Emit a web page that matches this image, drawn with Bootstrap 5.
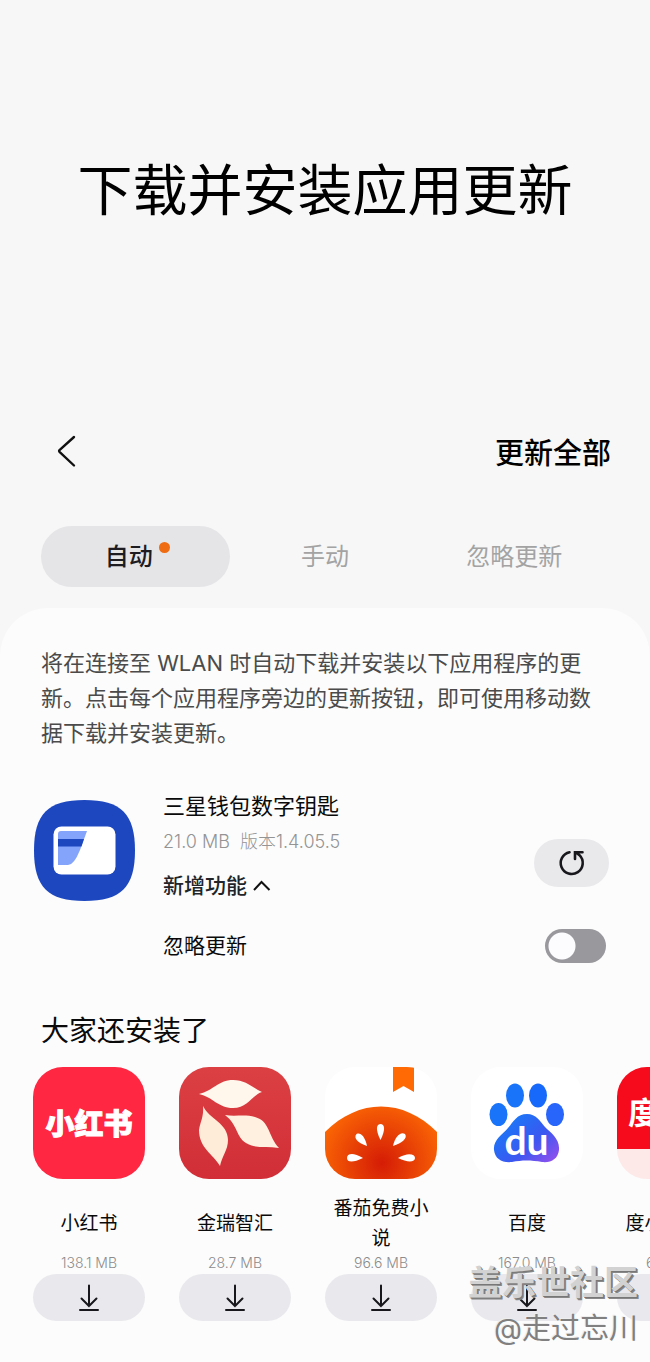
<!DOCTYPE html>
<html lang="zh-CN">
<head>
<meta charset="utf-8">
<meta name="viewport" content="width=device-width, initial-scale=1">
<title>下载并安装应用更新</title>
<link href="https://cdn.jsdelivr.net/npm/bootstrap@5.3.0/dist/css/bootstrap.min.css" rel="stylesheet">
<style>
  body { font-family: Inter, "Noto Sans CJK SC", sans-serif; background: #f7f7f7; color: #0a0a0a; }
  button { color: inherit; }
  .hero { padding: 148px 16px 188px; }
  .hero-title { font-size: 55px; line-height: 84px; font-weight: 400; color: #000; }
  .topbar { padding: 4px 39px 0 50px; height: 64px; }
  .back-btn { width: 32px; height: 48px; margin-top: -6px; }
  .update-all { font-size: 29px; line-height: 44px; font-weight: 500; color: #000; }
  .tabs-row { padding: 42px 41px 21px; }
  .tab-btn { height: 61px; font-size: 24px; line-height: 36px; color: #a3a3a3; background: none; }
  .tab-btn.active { background: #e5e5e8; color: #1c1c22; font-weight: 500; }
  .tab-label { display: inline-block; margin-right: 14px; padding-left: 0; }
  .tab-btn.active .tab-label { margin-right: 14px; }
  .new-dot { top: 3px; right: -17px; width: 11px; height: 11px; background: #f06c12; }
  .panel { background: #fcfcfc; border-radius: 48px 48px 0 0; padding-top: 38px; }
  .intro { font-size: 22px; line-height: 35px; color: #4b4b4b; padding: 0 48px 0 41px; margin-bottom: 38px; }
  .update-item { padding: 0 41px 0 34px; column-gap: 28px; }
  .wallet-icon { width: 101px; height: 101px; margin-top: 11px; }
  .item-name { font-size: 22px; line-height: 34px; font-weight: 400; }
  .item-meta { font-size: 18px; line-height: 38px; color: #949494; font-weight: 300; }
  .whats-new { font-size: 21px; line-height: 32px; font-weight: 500; margin-top: 9px; column-gap: 6px; }
  .refresh-btn { width: 75px; height: 48px; margin-bottom: 15px; background: #e9e9ec; }
  .ignore-row { margin-top: 26px; font-size: 21px; line-height: 36px; }
  .form-check-input.ignore-switch {
    width: 61px; height: 34px; margin: 0 3px 0 0; border: 0; background-color: #98989d;
    background-image: radial-gradient(circle at 17px 17px, #fcfcff 13px, transparent 14px);
    background-size: 100% 100%; background-position: left center;
  }
  .form-check-input.ignore-switch:checked { background-color: #3478f6; background-image: radial-gradient(circle at 44px 17px, #fcfcff 13px, transparent 14px); }
  .also-title { font-size: 28px; line-height: 40px; font-weight: 400; padding-left: 41px; margin: 47px 0 16px; }
  .app-strip { gap: 34px; padding: 0 33px 41px; overflow-x: auto; scrollbar-width: none; }
  .app-strip::-webkit-scrollbar { display: none; }
  .app-tile { width: 112px; }
  .app-icon { width: 112px; height: 112px; border-radius: 30px; display: block; }
  .app-name { height: 60px; margin-top: 15px; font-size: 19px; line-height: 30px; width: 100px; }
  .app-size { font-size: 14px; line-height: 18px; margin-bottom: 2px; color: #8c8c8c; font-weight: 300; }
  .get-btn { height: 47px; background: #e9e9ed; }
  .watermark { right: 12px; bottom: 12px; pointer-events: none; }
  .mark-site { font-size: 34px; line-height: 50px; font-weight: 700; color: #d2d2d2; text-shadow: 1px 1px 0 #777, 2px 2px 0 #888; }
  .mark-user { font-size: 29px; line-height: 42px; color: #808080; text-shadow: -1px -1px 0 #eee; }
</style>
</head>
<body>
<div class="position-relative min-vh-100 d-flex flex-column overflow-hidden">
  <header class="hero text-center">
    <h1 class="hero-title m-0">下载并安装应用更新</h1>
  </header>

  <div class="topbar d-flex align-items-center justify-content-between">
    <button type="button" class="back-btn btn p-0 border-0" aria-label="返回">
      <svg class="d-block" width="32" height="48" viewBox="0 0 32 48" fill="none" stroke="#111" stroke-width="2.4" stroke-linecap="round" stroke-linejoin="round"><path d="M24 10 9.500 23.200Q8.700 24 9.500 24.800L24 38.500"/></svg>
    </button>
    <button type="button" class="update-all btn p-0 border-0">更新全部</button>
  </div>

  <nav class="tabs-row d-flex" aria-label="更新方式">
    <button type="button" class="tab-btn active btn border-0 rounded-pill flex-fill w-100 p-0"><span class="tab-label position-relative">自动<span class="new-dot position-absolute rounded-circle"></span></span></button>
    <button type="button" class="tab-btn btn border-0 rounded-pill flex-fill w-100 p-0">手动</button>
    <button type="button" class="tab-btn btn border-0 rounded-pill flex-fill w-100 p-0">忽略更新</button>
  </nav>

  <main class="panel flex-grow-1">
    <p class="intro">将在连接至 WLAN 时自动下载并安装以下应用程序的更新。点击每个应用程序旁边的更新按钮，即可使用移动数据下载并安装更新。</p>

    <section class="update-item d-flex align-items-start">
      <svg class="wallet-icon flex-shrink-0" viewBox="0 0 101 101" aria-hidden="true">
        <path d="M50.500 0C87 0 101 14 101 50.500S87 101 50.500 101 0 87 0 50.500 14 0 50.500 0Z" fill="#1d47bf"/>
        <rect x="19.500" y="26.500" width="62" height="48" rx="8" fill="#fff"/>
        <path d="M27 31H53L46 50Q40 65 34 65H24V34Q24 31 27 31Z" fill="#84a3fa"/>
        <path d="M24 39H50L47.500 46.500H24Z" fill="#1d47bf"/>
      </svg>
      <div class="flex-grow-1">
        <div class="d-flex justify-content-between align-items-end">
          <div>
            <h2 class="item-name m-0">三星钱包数字钥匙</h2>
            <div class="item-meta">21.0 MB&nbsp; 版本1.4.05.5</div>
            <button type="button" class="whats-new btn p-0 border-0 d-flex align-items-center">新增功能
              <svg width="18" height="12" viewBox="0 0 18 12" fill="none" stroke="#111" stroke-width="2"><path d="M1 10 8.500 2 16.500 10"/></svg>
            </button>
          </div>
          <button type="button" class="refresh-btn btn border-0 rounded-pill p-0 d-flex align-items-center justify-content-center" aria-label="更新">
            <svg width="28" height="28" viewBox="0 0 28 28" fill="none" stroke="#17171c" stroke-width="2.600" stroke-linecap="round"><path d="M11.500 3.200A11 11 0 1 0 21.500 6.200L18 3.500M17 10V3.200H24.500"/></svg>
          </button>
        </div>
        <div class="ignore-row d-flex align-items-center justify-content-between">
          <label for="ignore">忽略更新</label>
          <div class="form-switch p-0 d-flex"><input class="ignore-switch form-check-input" type="checkbox" role="switch" id="ignore"></div>
        </div>
      </div>
    </section>

    <h2 class="also-title">大家还安装了</h2>
    <section class="app-strip d-flex">
      <article class="app-tile flex-shrink-0 d-flex flex-column align-items-center">
        <svg class="app-icon" viewBox="0 0 112 112" aria-hidden="true"><rect width="112" height="112" fill="#ff2742"/><text x="56" y="68" text-anchor="middle" font-family="Noto Sans CJK SC, sans-serif" font-size="29" font-weight="900" fill="#fff" stroke="#fff" stroke-width="1">小红书</text></svg>
        <div class="app-name d-flex align-items-center justify-content-center text-center">小红书</div>
        <div class="app-size">138.1 MB</div>
        <button type="button" class="get-btn btn border-0 rounded-pill w-100 p-0" aria-label="下载小红书"><svg width="22" height="28" viewBox="0 0 22 28" fill="none" stroke="#17171c" stroke-width="2" stroke-linecap="round"><path d="M11 1.500V22M3.500 14.500 11 22 18.500 14.500M2 26H20"/></svg></button>
      </article>
      <article class="app-tile flex-shrink-0 d-flex flex-column align-items-center">
        <svg class="app-icon" viewBox="0 0 112 112" aria-hidden="true">
          <defs><linearGradient id="leafBg" x2="0" y2="1"><stop stop-color="#dc4043"/><stop offset="1" stop-color="#d12e37"/></linearGradient></defs>
          <rect width="112" height="112" fill="url(#leafBg)"/>
          <path d="M20 27C34 24 39 13 54 13C67 13 74 21 83 25C73 28 69 41 54 41C39 41 34 30 20 27Z" fill="#fff6ec"/>
          <path d="M24 39C30 52 49 56 49 73C49 83 43 89 41 99C34 87 20 81 20 63C21 55 25 50 24 39Z" fill="#ffecd8"/>
          <path d="M46 48C56 50 66 47 76 50C91 54 89 69 100 81C87 79 76 82 67 76C57 70 59 58 46 48Z" fill="#fff0df"/>
        </svg>
        <div class="app-name d-flex align-items-center justify-content-center text-center">金瑞智汇</div>
        <div class="app-size">28.7 MB</div>
        <button type="button" class="get-btn btn border-0 rounded-pill w-100 p-0" aria-label="下载金瑞智汇"><svg width="22" height="28" viewBox="0 0 22 28" fill="none" stroke="#17171c" stroke-width="2" stroke-linecap="round"><path d="M11 1.500V22M3.500 14.500 11 22 18.500 14.500M2 26H20"/></svg></button>
      </article>
      <article class="app-tile flex-shrink-0 d-flex flex-column align-items-center">
        <svg class="app-icon" viewBox="0 0 112 112" aria-hidden="true">
          <defs><radialGradient id="tomato" gradientUnits="userSpaceOnUse" cx="57" cy="96" r="66"><stop stop-color="#d51c05"/><stop offset=".35" stop-color="#e23606"/><stop offset="1" stop-color="#fc6804"/></radialGradient></defs>
          <rect width="112" height="112" fill="#fff"/>
          <path d="M68 0H89V25L78.500 19 68 25Z" fill="#ff6a05"/>
          <path d="M0 65C34 31 78 31 112 65V112H0Z" fill="url(#tomato)"/>
          <g fill="#fff"><path d="M55.500 73C50 62 51.500 57 55.500 57S61 62 55.500 73Z"/>
          <path d="M42 79C40 69 35 65 31.500 67C28 71 33 76 42 79Z"/><path d="M68 79C70 69 76 64 80 67C83 71 77 76 68 79Z"/>
          <path d="M38 91C28 85 22 86.500 22 91S28 96 38 91Z"/><path d="M73 91C83 85 90 87 90 91S83 96 73 91Z"/></g>
        </svg>
        <div class="app-name d-flex align-items-center justify-content-center text-center">番茄免费小说</div>
        <div class="app-size">96.6 MB</div>
        <button type="button" class="get-btn btn border-0 rounded-pill w-100 p-0" aria-label="下载番茄免费小说"><svg width="22" height="28" viewBox="0 0 22 28" fill="none" stroke="#17171c" stroke-width="2" stroke-linecap="round"><path d="M11 1.500V22M3.500 14.500 11 22 18.500 14.500M2 26H20"/></svg></button>
      </article>
      <article class="app-tile flex-shrink-0 d-flex flex-column align-items-center">
        <svg class="app-icon" viewBox="0 0 112 112" aria-hidden="true">
          <defs><linearGradient id="paw" gradientUnits="userSpaceOnUse" x1="40" y1="45" x2="86" y2="96"><stop stop-color="#167cf8"/><stop offset=".55" stop-color="#3b57f0"/><stop offset="1" stop-color="#9a50ed"/></linearGradient></defs>
          <rect width="112" height="112" fill="#fff"/>
          <g fill="#1a74fa"><ellipse cx="44" cy="28.500" rx="9" ry="12"/><ellipse cx="67" cy="28.500" rx="9" ry="12" fill="#1769fb"/><ellipse cx="27.500" cy="47.500" rx="9" ry="11.500"/><ellipse cx="84" cy="47.500" rx="9" ry="11.500" fill="#2865fa"/></g>
          <path d="M56 47C65 47 69 54 74 60C80 66 89 72 88 83C87 92 80 96 71 95C60 93 51 93 41 95C31 96 24 92 23 83C22 73 31 68 37 61C43 54 46 47 56 47Z" fill="url(#paw)"/>
          <text x="55.500" y="88" text-anchor="middle" font-family="Lato, sans-serif" font-size="39" font-weight="700" fill="#fff">du</text>
        </svg>
        <div class="app-name d-flex align-items-center justify-content-center text-center">百度</div>
        <div class="app-size">167.0 MB</div>
        <button type="button" class="get-btn btn border-0 rounded-pill w-100 p-0" aria-label="下载百度"><svg width="22" height="28" viewBox="0 0 22 28" fill="none" stroke="#17171c" stroke-width="2" stroke-linecap="round"><path d="M11 1.500V22M3.500 14.500 11 22 18.500 14.500M2 26H20"/></svg></button>
      </article>
      <article class="app-tile flex-shrink-0 d-flex flex-column align-items-center">
        <svg class="app-icon" viewBox="0 0 112 112" aria-hidden="true"><rect width="112" height="112" fill="#fee9e9"/><rect width="112" height="82" fill="#f60b1c"/><text x="11" y="57" font-family="Noto Sans CJK SC, sans-serif" font-size="31" font-weight="700" fill="#fff">度小满</text></svg>
        <div class="app-name d-flex align-items-center justify-content-center text-center">度小满理财</div>
        <div class="app-size">65.0 MB</div>
        <button type="button" class="get-btn btn border-0 rounded-pill w-100 p-0" aria-label="下载度小满理财"><svg width="22" height="28" viewBox="0 0 22 28" fill="none" stroke="#17171c" stroke-width="2" stroke-linecap="round"><path d="M11 1.500V22M3.500 14.500 11 22 18.500 14.500M2 26H20"/></svg></button>
      </article>
    </section>
  </main>

  <div class="watermark position-absolute text-end">
    <div class="mark-site">盖乐世社区</div>
    <div class="mark-user">@走过忘川</div>
  </div>
</div>
<script src="https://cdn.jsdelivr.net/npm/bootstrap@5.3.0/dist/js/bootstrap.bundle.min.js"></script>
</body>
</html>
